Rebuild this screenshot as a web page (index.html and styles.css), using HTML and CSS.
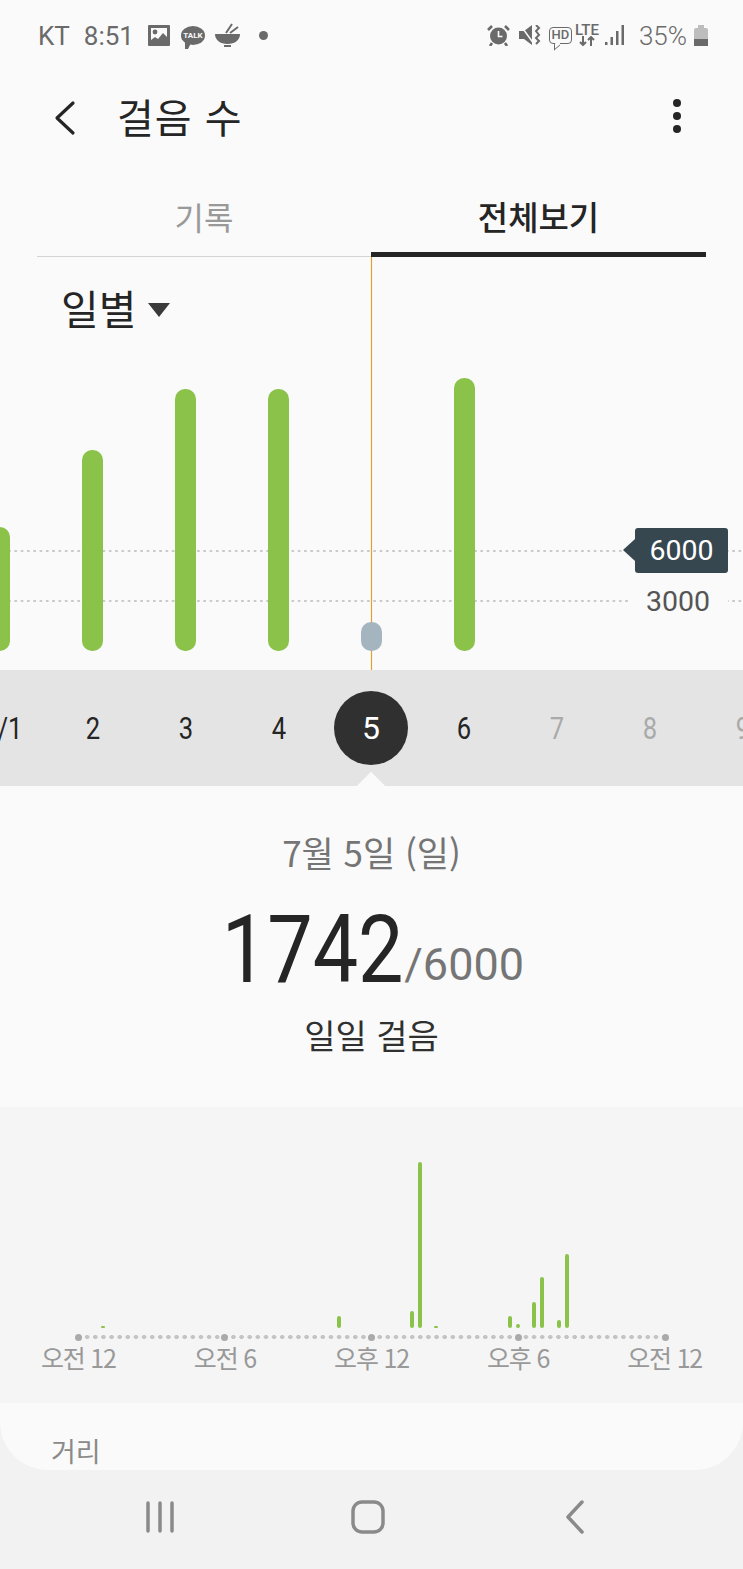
FILE: index.html
```html
<!DOCTYPE html>
<html lang="ko">
<head>
    <meta charset="UTF-8">
    <title>걸음 수</title>
    <link rel="stylesheet" href="styles.css">
</head>
<body>
    <div class="status-bar">
        <div class="status-left">
            <span class="carrier">KT</span>
            <span class="clock">8:51</span>
            <svg class="icon-photo" width="22" height="21" viewBox="0 0 22 21"><path fill="#6a6a6a" fill-rule="evenodd" d="M1 0h20a1 1 0 0 1 1 1v19a1 1 0 0 1-1 1H1a1 1 0 0 1-1-1V1a1 1 0 0 1 1-1zM3 3v12l4-3 3 2 5-6 4 4V3z"/><circle cx="7" cy="7" r="2.400" fill="#6a6a6a"/></svg>
            <span class="talk-icon"><span class="talk-label">TALK</span></span>
            <svg class="icon-bowl" width="25" height="24" viewBox="0 0 25 24"><path fill="#6a6a6a" d="M0 11h25c0 6-5 10-12.500 10S0 17 0 11z"/><path stroke="#6a6a6a" stroke-width="2" fill="none" d="M11 10l6-9M15 10l8-6M9 23h7"/></svg>
            <span class="status-dot"></span>
        </div>
        <div class="status-right">
            <svg class="icon-alarm" width="23" height="22" viewBox="0 0 23 22"><circle cx="11.500" cy="12" r="8.500" fill="#6a6a6a"/><path stroke="#fafafa" stroke-width="1.600" fill="none" d="M11.500 7v5.500h4"/><path stroke="#6a6a6a" stroke-width="2.600" fill="none" d="M1 6l4-4M22 6l-4-4M5 19l-2 3M18 19l2 3"/></svg>
            <svg class="icon-mute" width="22" height="20" viewBox="0 0 22 20"><path fill="#6a6a6a" d="M0 6h5l8-6v20l-8-6H0z"/><path stroke="#fafafa" stroke-width="1.500" d="M2 1l13 18"/><path stroke="#6a6a6a" stroke-width="2" fill="none" d="M17 0l3 3-3 3 3 4-3 3 3 3-3 3"/></svg>
            <span class="hd-icon">HD</span>
            <span class="lte-icon"><span class="lte-label">LTE</span><svg width="16" height="10" viewBox="0 0 16 10"><path stroke="#6a6a6a" stroke-width="2" fill="none" d="M4 0v9M1 6l3 3 3-3M12 10V1M9 4l3-3 3 3"/></svg></span>
            <svg class="icon-signal" width="19" height="20" viewBox="0 0 19 20"><path fill="#6a6a6a" d="M0 17h2.500v3H0zM5.500 12H8v8H5.500zM11 6h2.500v14H11zM16.500 0H19v20h-2.500z"/></svg>
            <span class="battery-text">35%</span>
            <span class="battery"><span class="battery-fill"></span></span>
        </div>
    </div>

    <div class="app-bar">
        <svg class="back-icon" width="24" height="36" viewBox="0 0 24 36"><path stroke="#252525" stroke-width="3.200" fill="none" stroke-linecap="round" stroke-linejoin="round" d="M20 3L4 18l16 15"/></svg>
        <h1 class="page-title">걸음 수</h1>
        <div class="more-menu"><span></span><span></span><span></span></div>
    </div>

    <div class="tabs">
        <div class="tab">기록</div>
        <div class="tab tab-active">전체보기</div>
    </div>

    <div class="day-chart">
        <div class="period-select">일별<span class="caret"></span></div>
        <div class="grid-line grid-6000"></div>
        <div class="grid-line grid-3000"></div>
        <div class="guide-line"></div>
        <div class="day-bar" style="left: -11px; top: 270px; height: 124px"></div>
        <div class="day-bar" style="left: 82px; top: 193px; height: 201px"></div>
        <div class="day-bar" style="left: 175px; top: 132px; height: 262px"></div>
        <div class="day-bar" style="left: 268px; top: 132px; height: 262px"></div>
        <div class="day-bar day-bar-today" style="left: 361px; top: 365px; height: 29px"></div>
        <div class="day-bar" style="left: 454px; top: 121px; height: 273px"></div>
        <div class="goal-tag">6000</div>
        <div class="axis-label">3000</div>
    </div>

    <div class="day-strip">
        <span class="day day-first">/1</span>
        <span class="day" style="left: 47px">2</span>
        <span class="day" style="left: 140px">3</span>
        <span class="day" style="left: 233px">4</span>
        <span class="day day-current" style="left: 334px">5</span>
        <span class="day" style="left: 418px">6</span>
        <span class="day day-future" style="left: 511px">7</span>
        <span class="day day-future" style="left: 604px">8</span>
        <span class="day day-future" style="left: 697px">9</span>
        <span class="strip-notch"></span>
    </div>

    <div class="summary">
        <div class="summary-date">7월 5일 (일)</div>
        <div class="summary-count"><span class="steps">1742</span><span class="goal">/6000</span></div>
        <div class="summary-label">일일 걸음</div>
    </div>

    <div class="hour-chart">
        <div class="hour-bar" style="left: 101px; top: 219px; height: 2px"></div>
        <div class="hour-bar" style="left: 337px; top: 209px; height: 12px"></div>
        <div class="hour-bar" style="left: 410px; top: 204px; height: 17px"></div>
        <div class="hour-bar" style="left: 418px; top: 55px; height: 166px"></div>
        <div class="hour-bar" style="left: 434px; top: 219px; height: 2px"></div>
        <div class="hour-bar" style="left: 508px; top: 209px; height: 12px"></div>
        <div class="hour-bar" style="left: 516px; top: 217px; height: 4px"></div>
        <div class="hour-bar" style="left: 532px; top: 195px; height: 26px"></div>
        <div class="hour-bar" style="left: 540px; top: 170px; height: 51px"></div>
        <div class="hour-bar" style="left: 557px; top: 213px; height: 8px"></div>
        <div class="hour-bar" style="left: 565px; top: 147px; height: 74px"></div>
        <div class="hour-axis">
            <span class="hour-tick"></span><span class="hour-tick"></span><span class="hour-tick"></span><span class="hour-tick"></span><span class="hour-tick"></span>
        </div>
        <div class="hour-labels">
            <span>오전 12</span><span>오전 6</span><span>오후 12</span><span>오후 6</span><span>오전 12</span>
        </div>
    </div>

    <div class="detail-card">
        <div class="detail-title">거리</div>
    </div>

    <div class="nav-bar">
        <svg class="nav-recent" width="32" height="32" viewBox="0 0 32 32"><path stroke="#8a8a8a" stroke-width="3.500" stroke-linecap="round" d="M3 2v28M15 2v28M27 2v28"/></svg>
        <svg class="nav-home" width="34" height="34" viewBox="0 0 34 34"><rect x="2" y="2" width="30" height="30" rx="9" stroke="#8a8a8a" stroke-width="3.500" fill="none"/></svg>
        <svg class="nav-back" width="20" height="34" viewBox="0 0 20 34"><path stroke="#8a8a8a" stroke-width="3.500" stroke-linecap="round" stroke-linejoin="round" fill="none" d="M17 2L3 17l14 15"/></svg>
    </div>
</body>
</html>
```

FILE: styles.css
```css
* {
    margin: 0;
    padding: 0;
    box-sizing: border-box;
}

html {
    background-color: #f2f2f2;
}

body {
    width: 743px;
    height: 1569px;
    overflow: hidden;
    /* the bottom corners of the card show the nav colour */
    background: linear-gradient(#fafafa 1403px, #f2f2f2 1403px);
    color: #252525;
    font-family: 'Noto Sans CJK KR', 'Noto Sans', sans-serif;
}

/* status bar */
.status-bar {
    height: 70px;
    display: flex;
    justify-content: space-between;
    align-items: center;
    padding: 0 35px 0 38px;
    color: #6a6a6a;
    font-family: Roboto, sans-serif;
}

.status-left, .status-right {
    display: flex;
    align-items: center;
}

.carrier, .clock, .battery-text {
    font-size: 26px;
    font-weight: 300;
    margin-top: 2px;
}

.carrier, .clock {
    margin-right: 14px;
    font-weight: 400;
}

.talk-icon {
    position: relative;
    width: 24px;
    height: 19px;
    margin-left: 11px;
    border-radius: 50%;
    background-color: #6a6a6a;
    display: flex;
    align-items: center;
    justify-content: center;
}

.talk-icon::after {
    content: "";
    position: absolute;
    left: 4px;
    bottom: -4px;
    border-left: 3px solid #6a6a6a;
    border-right: 3px solid transparent;
    border-top: 6px solid #6a6a6a;
}

.talk-label {
    color: #fafafa;
    font-size: 8px;
    font-weight: 700;
}

.icon-bowl {
    margin-left: 10px;
}

.status-dot {
    width: 9px;
    height: 9px;
    margin-left: 19px;
    border-radius: 50%;
    background-color: #6a6a6a;
}

.icon-mute {
    margin-left: 9px;
}

.hd-icon {
    position: relative;
    width: 23px;
    height: 17px;
    margin-left: 8px;
    border: 1.500px solid #6a6a6a;
    border-radius: 4px;
    font-size: 13px;
    font-weight: 500;
    line-height: 14px;
    text-align: center;
}

.hd-icon::after {
    content: "";
    position: absolute;
    left: 4px;
    bottom: -5px;
    width: 5px;
    height: 5px;
    background-color: #fafafa;
    border-left: 1.500px solid #6a6a6a;
    border-bottom: 1.500px solid #6a6a6a;
    transform: skewY(-40deg);
}

.lte-icon {
    display: flex;
    flex-direction: column;
    align-items: center;
    width: 26px;
    margin-left: 2px;
}

.lte-label {
    font-size: 15px;
    font-weight: 500;
    line-height: 12px;
}

.icon-signal {
    margin-left: 5px;
    margin-right: 15px;
}

.battery-text {
    margin-right: 7px;
}

.battery {
    position: relative;
    width: 14px;
    height: 18px;
    margin-top: 3px;
    border-radius: 2px 2px 1px 1px;
    background-color: #bdbdbd;
    display: flex;
    align-items: flex-end;
}

.battery::before {
    content: "";
    position: absolute;
    left: 4px;
    top: -3px;
    width: 6px;
    height: 3px;
    background-color: #bdbdbd;
}

.battery-fill {
    width: 100%;
    height: 7px;
    background-color: #6a6a6a;
}

/* app bar */
.app-bar {
    height: 95px;
    display: flex;
    align-items: center;
    padding: 0 62px 4px 53px;
}

.back-icon {
    margin-right: 40px;
    margin-top: 4px;
}

.page-title {
    flex: 1;
    font-size: 40px;
    font-weight: 400;
    letter-spacing: 1px;
}

.more-menu {
    display: flex;
    flex-direction: column;
    gap: 5px;
}

.more-menu span {
    width: 8px;
    height: 8px;
    border-radius: 50%;
    background-color: #252525;
}

/* tabs */
.tabs {
    height: 92px;
    margin: 0 37px;
    display: flex;
}

.tab {
    width: 334px;
    text-align: center;
    font-size: 32px;
    line-height: 102px;
    color: #999;
    border-bottom: 1px solid #d4d4d4;
}

.tab-active {
    width: 335px;
    font-size: 33px;
    color: #252525;
    font-weight: 500;
    border-bottom: 5px solid #252525;
}

/* daily chart */
.day-chart {
    position: relative;
    height: 413px;
    overflow: hidden;
}

.period-select {
    padding: 22px 0 0 61px;
    font-size: 41px;
    line-height: 56px;
    display: flex;
    align-items: center;
}

.caret {
    margin-left: 12px;
    margin-top: 5px;
    border-left: 11px solid transparent;
    border-right: 11px solid transparent;
    border-top: 14px solid #3a3a3a;
}

.grid-line {
    position: absolute;
    left: 0;
    right: 0;
    height: 2px;
    background-image: radial-gradient(circle, #c8c8c8 1px, transparent 1.300px);
    background-size: 6.300px 2px;
}

.grid-6000 {
    top: 293px;
}

.grid-3000 {
    top: 343px;
}

.guide-line {
    position: absolute;
    left: 371px;
    top: 0;
    bottom: 0;
    width: 1px;
    background-color: #dfa030;
    box-shadow: 0 0 1px #e8b860;
}

.day-bar {
    position: absolute;
    width: 21px;
    border-radius: 10px;
    background-color: #8bc34a;
}

.day-bar-today {
    background-color: #a5b5c0;
}

.goal-tag {
    position: absolute;
    left: 635px;
    top: 271px;
    width: 93px;
    height: 45px;
    border-radius: 3px;
    background-color: #37474f;
    color: #fff;
    font-family: Roboto, sans-serif;
    font-size: 28.500px;
    line-height: 46px;
    text-align: center;
}

.goal-tag::before {
    content: "";
    position: absolute;
    left: -12px;
    top: 11px;
    border-top: 11px solid transparent;
    border-bottom: 11px solid transparent;
    border-right: 12px solid #37474f;
}

.axis-label {
    position: absolute;
    left: 628px;
    top: 322px;
    width: 100px;
    height: 44px;
    background-color: #fafafa;
    color: #555;
    font-family: Roboto, sans-serif;
    font-size: 28.500px;
    line-height: 45px;
    text-align: center;
}

/* day strip */
.day-strip {
    position: relative;
    height: 116px;
    background-color: #e4e4e4;
    overflow: hidden;
}

.day {
    position: absolute;
    top: 21px;
    width: 92px;
    height: 74px;
    color: #252525;
    font-family: Roboto, sans-serif;
    font-size: 32px;
    line-height: 74px;
    text-align: center;
    transform: scaleX(0.8);
}

.day-first {
    left: -36px;
}

.day-future {
    color: #aaa;
}

.day-current {
    width: 74px;
    border-radius: 50%;
    background-color: #303030;
    color: #fff;
    transform: none;
}

.strip-notch {
    position: absolute;
    left: 361px;
    bottom: -10px;
    width: 20px;
    height: 20px;
    background-color: #fafafa;
    transform: rotate(45deg);
}

/* summary */
.summary {
    height: 321px;
    text-align: center;
}

.summary-date {
    padding-top: 41px;
    font-size: 35px;
    line-height: 50px;
    color: #757575;
}

.summary-count {
    margin-top: 23px;
    height: 100px;
    line-height: 100px;
    font-family: Roboto, sans-serif;
}

.steps {
    display: inline-block;
    margin: 0 -14px 0 -12px;
    font-size: 94px;
    color: #252525;
    transform: scaleX(0.86);
}

.goal {
    font-size: 45px;
    color: #757575;
    vertical-align: 2px;
}

.summary-label {
    margin-top: 10px;
    font-size: 34px;
    line-height: 50px;
    color: #303030;
}

/* hourly chart */
.hour-chart {
    position: relative;
    height: 296px;
    background-color: #f5f5f5;
}

.hour-bar {
    position: absolute;
    width: 4px;
    border-radius: 2px;
    background-color: #8bc34a;
}

.hour-axis {
    position: absolute;
    left: 74.500px;
    top: 226px;
    width: 594px;
    height: 8px;
    display: flex;
    justify-content: space-between;
    align-items: center;
    background-image: radial-gradient(circle, #c4c4c4 2px, transparent 2.400px);
    background-size: 8.140px 8px;
}

.hour-tick {
    width: 7px;
    height: 7px;
    border-radius: 50%;
    background-color: #aaa;
}

.hour-labels {
    position: absolute;
    left: 5px;
    top: 231px;
    width: 733px;
    display: flex;
    justify-content: space-between;
}

.hour-labels span {
    width: 147px;
    text-align: center;
    color: #999;
    font-size: 25px;
    line-height: 38px;
    letter-spacing: -1.200px;
}

/* bottom */
.detail-card {
    height: 67px;
    padding: 30px 0 0 51px;
    background-color: #fafafa;
    border-radius: 0 0 48px 48px;
    overflow: hidden;
}

.detail-title {
    font-size: 27px;
    line-height: 36px;
    color: #8a8a8a;
}

.nav-bar {
    height: 99px;
    background-color: #f2f2f2;
    display: flex;
    align-items: center;
    padding: 0 0 6px 145px;
}

.nav-home {
    margin-left: 174px;
}

.nav-back {
    margin-left: 180px;
}
```
